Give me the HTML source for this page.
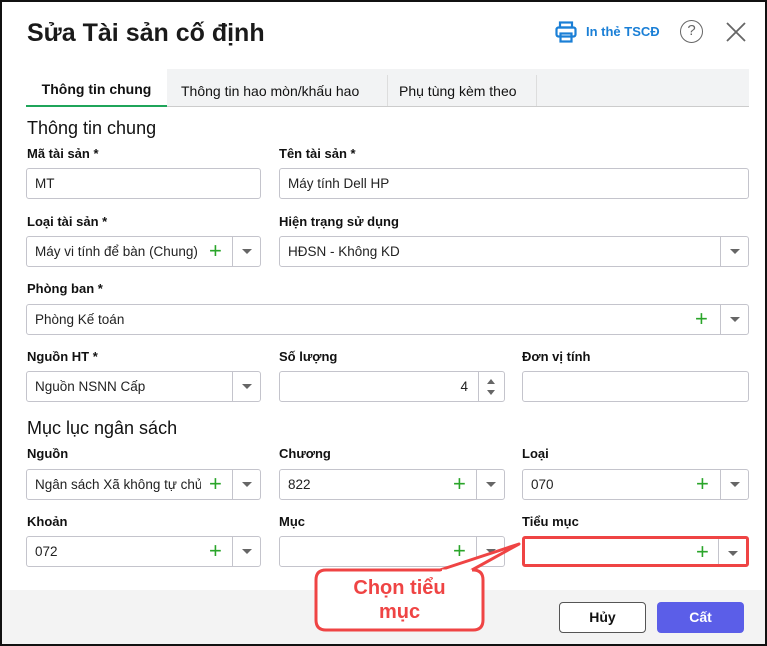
<!DOCTYPE html>
<html><head><meta charset="utf-8"><style>
*{box-sizing:border-box;margin:0;padding:0}
body{width:767px;height:646px;position:relative;background:#fff;font-family:"Liberation Sans",sans-serif;color:#111;overflow:hidden}
#frame{position:absolute;left:0;top:0;width:767px;height:646px;border:2px solid #111;border-left-width:2px}
.a{position:absolute}
.lbl{position:absolute;font-size:13px;font-weight:bold;color:#111}
.in{position:absolute;height:31px;border:1px solid #c4c4cc;border-radius:3px;background:#fff;font-size:13.5px;line-height:29px;padding-left:8px;color:#222;white-space:nowrap;overflow:hidden}
.dd{position:absolute;right:0;top:0;width:28px;height:29px;border-left:1px solid #c4c4cc}
.dd:after{content:"";position:absolute;left:9px;top:12px;border-left:5px solid transparent;border-right:5px solid transparent;border-top:5px solid #666}
.pl{position:absolute;top:0;font-size:22px;line-height:28px;color:#2aa52a;font-weight:normal}
.sec{position:absolute;font-size:18px;color:#111}
</style></head><body>
<div class="a" style="left:27px;top:19px;font-size:25px;font-weight:bold;color:#1a1a1a">Sửa Tài sản cố định</div>
<svg class="a" style="left:554px;top:20px" width="24" height="24" viewBox="0 0 24 24" fill="none" stroke="#1a7fd6" stroke-width="2.2"><rect x="6" y="2.5" width="12" height="5"/><rect x="2.5" y="7.5" width="19" height="9" rx="2"/><rect x="6.5" y="13.5" width="11" height="8"/></svg>
<div class="a" style="left:586px;top:24px;font-size:13px;font-weight:bold;color:#1a7fd6">In thẻ TSCĐ</div>
<div class="a" style="left:680px;top:20px;width:23px;height:23px;border:1.6px solid #666;border-radius:50%;text-align:center;font-size:15px;line-height:20px;color:#666">?</div>
<svg class="a" style="left:725px;top:21px" width="22" height="22" viewBox="0 0 22 22" stroke="#666" stroke-width="1.8"><path d="M2 2L20 20M20 2L2 20"/></svg>

<div class="a" style="left:26px;top:69px;width:723px;height:38px;background:#f2f3f4;border-bottom:1px solid #ccc"></div>
<div class="a" style="left:26px;top:69px;width:141px;height:38px;background:#fff;border-bottom:2px solid #1fa55a;font-size:14px;font-weight:bold;text-align:center;line-height:40px">Thông tin chung</div>
<div class="a" style="left:181px;top:83px;font-size:14px">Thông tin hao mòn/khấu hao</div>
<div class="a" style="left:387px;top:75px;width:1px;height:31px;background:#ddd"></div>
<div class="a" style="left:399px;top:83px;font-size:14px">Phụ tùng kèm theo</div>
<div class="a" style="left:536px;top:75px;width:1px;height:31px;background:#ddd"></div>

<div class="sec" style="left:27px;top:118px">Thông tin chung</div>
<div class="lbl" style="left:27px;top:146px">Mã tài sản *</div>
<div class="lbl" style="left:279px;top:146px">Tên tài sản *</div>
<div class="in" style="left:26px;top:168px;width:235px">MT</div>
<div class="in" style="left:279px;top:168px;width:470px">Máy tính Dell HP</div>

<div class="lbl" style="left:27px;top:214px">Loại tài sản *</div>
<div class="lbl" style="left:279px;top:214px">Hiện trạng sử dụng</div>
<div class="in" style="left:26px;top:236px;width:235px">Máy vi tính để bàn (Chung)<span class="pl" style="left:182px">+</span><span class="dd"></span></div>
<div class="in" style="left:279px;top:236px;width:470px">HĐSN - Không KD<span class="dd"></span></div>

<div class="lbl" style="left:27px;top:281px">Phòng ban *</div>
<div class="in" style="left:26px;top:304px;width:723px">Phòng Kế toán<span class="pl" style="left:668px">+</span><span class="dd"></span></div>

<div class="lbl" style="left:27px;top:349px">Nguồn HT *</div>
<div class="lbl" style="left:279px;top:349px">Số lượng</div>
<div class="lbl" style="left:522px;top:349px">Đơn vị tính</div>
<div class="in" style="left:26px;top:371px;width:235px">Nguồn NSNN Cấp<span class="dd"></span></div>
<div class="in" style="left:279px;top:371px;width:226px;padding-right:36px;text-align:right">4
<span class="a" style="right:0;top:0;width:26px;height:29px;border-left:1px solid #c4c4cc"><span class="a" style="left:8px;top:7px;border-left:4px solid transparent;border-right:4px solid transparent;border-bottom:5px solid #666"></span><span class="a" style="left:8px;top:18px;border-left:4px solid transparent;border-right:4px solid transparent;border-top:5px solid #666"></span></span></div>
<div class="in" style="left:522px;top:371px;width:227px"></div>

<div class="sec" style="left:27px;top:418px">Mục lục ngân sách</div>
<div class="lbl" style="left:27px;top:446px">Nguồn</div>
<div class="lbl" style="left:279px;top:446px">Chương</div>
<div class="lbl" style="left:522px;top:446px">Loại</div>
<div class="in" style="left:26px;top:469px;width:235px">Ngân sách Xã không tự chủ<span class="a" style="left:174px;top:0;width:32px;height:29px;background:#fff"></span><span class="pl" style="left:182px">+</span><span class="dd"></span></div>
<div class="in" style="left:279px;top:469px;width:226px">822<span class="pl" style="left:173px">+</span><span class="dd"></span></div>
<div class="in" style="left:522px;top:469px;width:227px">070<span class="pl" style="left:173px">+</span><span class="dd"></span></div>

<div class="lbl" style="left:27px;top:514px">Khoản</div>
<div class="lbl" style="left:279px;top:514px">Mục</div>
<div class="lbl" style="left:522px;top:514px">Tiểu mục</div>
<div class="in" style="left:26px;top:536px;width:235px">072<span class="pl" style="left:182px">+</span><span class="dd"></span></div>
<div class="in" style="left:279px;top:536px;width:226px"><span class="pl" style="left:173px">+</span><span class="dd"></span></div>
<div class="in" style="left:522px;top:536px;width:227px;border:3px solid #ef4444;line-height:25px"><span class="pl" style="left:171px;line-height:26px">+</span><span class="dd" style="height:25px"></span></div>

<div class="a" style="left:2px;top:590px;width:763px;height:54px;background:#f3f3f3"></div>
<div class="a" style="left:559px;top:602px;width:87px;height:31px;border:1px solid #555;border-radius:4px;background:#fff;text-align:center;line-height:29px;font-size:14px;font-weight:bold">Hủy</div>
<div class="a" style="left:657px;top:602px;width:87px;height:31px;border-radius:4px;background:#5b5ee8;color:#fff;text-align:center;line-height:31px;font-size:14px;font-weight:bold">Cất</div>

<svg class="a" style="left:300px;top:535px" width="240" height="105" viewBox="300 535 240 105">
<path d="M326 570 L440 570 L519 544 L472 570 L473 570 Q483 570 483 580 L483 620 Q483 630 473 630 L326 630 Q316 630 316 620 L316 580 Q316 570 326 570 Z" fill="#fff" stroke="#ef4444" stroke-width="3" stroke-linejoin="round"/>
<path d="M442 571 L472 571" stroke="#fff" stroke-width="3"/>
</svg>
<div class="a" style="left:316px;top:576px;width:167px;text-align:center;font-size:20px;font-weight:bold;color:#ef4444;line-height:24px">Chọn tiểu<br>mục</div>

<div id="frame"></div>
</body></html>
